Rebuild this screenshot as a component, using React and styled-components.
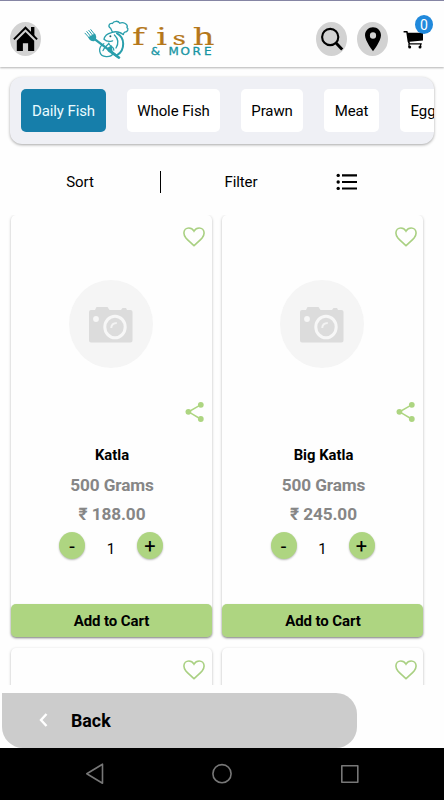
import { useState } from "react";
import styled, { createGlobalStyle } from "styled-components";

const categories = [
  { name: "Daily Fish", width: 85 },
  { name: "Whole Fish", width: 93 },
  { name: "Prawn", width: 62 },
  { name: "Meat", width: 55 },
  { name: "Egg", width: 46 },
];

const products = [
  { id: 1, name: "Katla", weight: "500 Grams", price: "188.00" },
  { id: 2, name: "Big Katla", weight: "500 Grams", price: "245.00" },
  // details are still loading
  { id: 3 },
  { id: 4 },
];

function App() {
  const [category, setCategory] = useState("Daily Fish");
  const [cartCount, setCartCount] = useState(0);

  return (
    <Screen>
      <GlobalStyle />
      <Header>
        <RoundButton aria-label="Home">
          <HomeIcon />
        </RoundButton>
        <Logo />
        <HeaderActions>
          <RoundButton aria-label="Search">
            <SearchIcon />
          </RoundButton>
          <RoundButton aria-label="Location">
            <PinIcon />
          </RoundButton>
          <CartButton aria-label="Cart">
            <CartIcon />
            <Badge>{cartCount}</Badge>
          </CartButton>
        </HeaderActions>
      </Header>
      <CategoryBar>
        {categories.map(({ name, width }) => (
          <Chip
            key={name}
            $width={width}
            $active={name === category}
            onClick={() => setCategory(name)}
          >
            {name}
          </Chip>
        ))}
      </CategoryBar>
      <Toolbar>
        <ToolbarButton>Sort</ToolbarButton>
        <Divider />
        <ToolbarButton>Filter</ToolbarButton>
        <ListIcon />
      </Toolbar>
      <ProductGrid>
        {products.map((product) => (
          <ProductCard
            key={product.id}
            product={product}
            onAdd={(amount) => setCartCount(cartCount + amount)}
          />
        ))}
      </ProductGrid>
      <BackBar>
        <BackIcon />
        Back
      </BackBar>
      <SystemNav>
        <svg width="20" height="24" viewBox="0 0 20 24">
          <path d="M17.5 2.2V21.2L1.8 11.7Z" />
        </svg>
        <svg width="22" height="24" viewBox="0 0 22 24">
          <circle cx="11" cy="11.7" r="9.1" />
        </svg>
        <svg width="20" height="24" viewBox="0 0 20 24">
          <rect x="1.8" y="3.7" width="16" height="16.5" />
        </svg>
      </SystemNav>
    </Screen>
  );
}

function ProductCard({ product, onAdd }) {
  const [amount, setAmount] = useState(1);

  return (
    <Card>
      <Picture>
        <HeartIcon />
        <PlaceholderIcon />
        <ShareIcon />
      </Picture>
      {product.name && (
        <>
          <ProductName>{product.name}</ProductName>
          <Detail>{product.weight}</Detail>
          <Detail>₹ {product.price}</Detail>
          <Stepper>
            <StepButton onClick={() => setAmount(Math.max(1, amount - 1))}>
              -
            </StepButton>
            <Amount>{amount}</Amount>
            <StepButton onClick={() => setAmount(amount + 1)}>+</StepButton>
          </Stepper>
          <AddButton onClick={() => onAdd(amount)}>Add to Cart</AddButton>
        </>
      )}
    </Card>
  );
}

function Logo() {
  return (
    <LogoSvg width="134" height="40" viewBox="83 18 134 40">
      <g fill="none" stroke="#2a9fac" strokeWidth="1.3" strokeLinecap="round">
        {/* chef hat */}
        <path d="M112.4 31L110.6 27.2C107.6 25.6 109 21.8 112.4 22.4C113.6 19.6 118.4 19.6 119.8 22.2C123 20.6 128.6 23 127 26.6C129 28 127.6 31 124.8 31.2C123.8 31.6 123.6 32.4 123.4 33.4" />
        <path d="M112.2 31.4C115.6 30 120.4 31 123.2 33.6" />
        {/* body */}
        <path d="M111.6 31.6C107.4 32.6 104.6 35 104 38.2C106.2 40.4 109.4 40.8 112.6 39.8" />
        <path d="M117 32.4C124.8 36.4 125.6 48.6 117.2 54" strokeWidth="2" />
        <path d="M114.4 34C118.6 38 118.8 42.4 116 47" />
        <path d="M103.8 42.8C97.4 46.2 98.6 55.2 106.2 55.6C109.8 55.8 112.2 54.4 113.4 52.4" />
        <path d="M103 49.6C104 46.8 107.2 44.6 108.8 42.4C110 46 114.4 45.4 113.8 49.2" />
        {/* fork */}
        <path d="M85 32.2L89.4 37M86.8 30.6L90.8 35.6M88.8 29.4L92.6 34.2M90.8 28.6L94.4 33.2" strokeWidth="1" />
        <path d="M94 37.6L119 56.6" strokeWidth="2.4" />
      </g>
      <path d="M88.2 36.2L94.8 32.6C97 35.4 96.6 38.6 94 40.2C91.2 40.4 89.2 39 88.2 36.2Z" fill="#2a9fac" />
      <path d="M106.4 47.4L111.6 44.2L112.6 50.2L120.4 56.6L118.4 57.8L108 50.4Z" fill="#2a9fac" />
      <circle cx="110.4" cy="35.2" r="1" fill="#23616b" />
      <LogoName transform="translate(0 43.6) scale(1.38 1)">
        <tspan x="95.8">f</tspan>
        <tspan x="113.3">i</tspan>
        <tspan x="125" fontSize="19">
          s
        </tspan>
        <tspan x="139.6">h</tspan>
      </LogoName>
      <LogoTagline
        transform="translate(0 54) scale(1.14 1)"
        x="132.2 140 147.8 158.4 168.8 179"
      >
        &amp; MORE
      </LogoTagline>
    </LogoSvg>
  );
}

const HomeIcon = () => (
  <svg width="25" height="26" viewBox="0 0 25 26">
    <path d="M12.5 5.9L21.2 14.8V25H15.1V17.2H9.9V25H3.8V14.8Z" />
    <path
      d="M0.9 13.4L12.5 1.7L24.1 13.4"
      fill="none"
      stroke="#000"
      strokeWidth="2"
    />
    <path d="M18 1H21.4V10.5L18 7Z" />
  </svg>
);

const SearchIcon = () => (
  <svg width="24" height="24" viewBox="0 0 24 24" fill="none" stroke="#000">
    <circle cx="10.2" cy="10" r="8.1" strokeWidth="2.1" />
    <path d="M15.8 15.8L22.2 22.6" strokeWidth="2.9" />
  </svg>
);

const PinIcon = () => (
  <svg width="18" height="26" viewBox="0 0 18 26">
    <path
      fillRule="evenodd"
      d="M9 1.2C4.6 1.2 1 4.6 1 9.2C1 15 9 25.2 9 25.2S17 15 17 9.2C17 4.6 13.4 1.2 9 1.2ZM9 6.2A3.1 3.3 0 1 1 9 12.8A3.1 3.3 0 1 1 9 6.2Z"
    />
  </svg>
);

const CartIcon = () => (
  <svg width="21" height="20" viewBox="0 0 21 20">
    <path d="M0.6 1H4.4L5 2.7H20V10.6L6.5 11.7L7 13.2H18.8V14.6H5.8L4.6 11.6L3.3 2.5H0.6Z" />
    <circle cx="6.7" cy="17" r="1.5" />
    <circle cx="17" cy="17" r="1.5" />
    <path d="M5.4 14H6.6V17H5.4ZM17 14H18.2V17H17Z" />
  </svg>
);

const ListIcon = () => (
  <ListSvg width="22" height="18" viewBox="0 0 22 18">
    <circle cx="2.2" cy="2.4" r="1.7" />
    <circle cx="2.2" cy="9" r="1.7" />
    <circle cx="2.2" cy="15.4" r="1.7" />
    <path d="M6 1.3H21V3.6H6ZM6 7.9H21V10.1H6ZM6 14.4H21V16.6H6Z" />
  </ListSvg>
);

const HeartIcon = () => (
  <HeartSvg width="22" height="20" viewBox="0 0 22 20">
    <path d="M11 18.7C8.4 16 5.2 13.6 2.9 10.9C1.5 9.2 0.9 7.9 0.9 6.1C0.9 3 3.2 1 5.8 1C7.9 1 9.8 2.1 11 4.1C12.2 2.1 14.1 1 16.2 1C18.8 1 21.1 3 21.1 6.1C21.1 7.9 20.5 9.2 19.1 10.9C16.8 13.6 13.6 16 11 18.7Z" />
  </HeartSvg>
);

const ShareIcon = () => (
  <ShareSvg width="19" height="22" viewBox="0 0 19 22">
    <path d="M15.6 3.8L3.6 10.8L15.6 18" fill="none" />
    <circle cx="15.8" cy="3.8" r="2.9" />
    <circle cx="3.4" cy="10.8" r="2.9" />
    <circle cx="15.8" cy="18" r="2.9" />
  </ShareSvg>
);

const PlaceholderIcon = () => (
  <svg width="84" height="88" viewBox="0 0 84 88">
    <ellipse cx="42" cy="44" rx="42" ry="44" fill="#f5f5f5" />
    <path
      fill="#dcdcdc"
      d="M22 30H26L27.5 27H38.5L40.5 30H52L53.5 28H57L58 30H61.5Q63.5 30 63.5 32V60.5Q63.5 62.5 61.5 62.5H22Q20 62.5 20 60.5V32Q20 30 22 30Z"
    />
    <circle cx="27" cy="39" r="2.9" fill="#f7f7f7" />
    <ellipse cx="46" cy="47" rx="10.2" ry="10.8" fill="#dcdcdc" stroke="#f7f7f7" strokeWidth="3" />
    <path d="M42.2 48Q42.5 43.2 47.8 43" fill="none" stroke="#f3f3f3" strokeWidth="2" />
  </svg>
);

const BackIcon = () => (
  <svg width="9" height="14" viewBox="0 0 9 14">
    <path d="M7.5 1L2 7L7.5 13" fill="none" stroke="#fff" strokeWidth="2.4" />
  </svg>
);

export default App;

const GlobalStyle = createGlobalStyle`
  * {
    box-sizing: border-box;
  }

  body {
    margin: 0;
    background: #fefefe;
    font-family: Roboto, "Liberation Sans", sans-serif;
    color: #000;
  }

  button {
    border: 0;
    padding: 0;
    background: none;
    font-family: inherit;
    color: inherit;
  }
`;

const Screen = styled.div`
  width: 444px;
  height: 800px;
  display: flex;
  flex-direction: column;
  overflow: hidden;
`;

const Header = styled.header`
  flex: none;
  height: 67px;
  display: flex;
  align-items: center;
  padding: 10px 20px 0 10px;
  border-top: 1px solid #8585a4;
  box-shadow: 0 1px 2px rgba(0, 0, 0, 0.3);
`;

const HeaderActions = styled.div`
  display: flex;
  align-items: center;
  gap: 10px;
  margin-left: auto;
`;

const RoundButton = styled.button`
  width: 31px;
  height: 34px;
  display: flex;
  align-items: center;
  justify-content: center;
  border-radius: 50%;
  background: #d2d2d2;
`;

const CartButton = styled.button`
  position: relative;
  display: flex;
  margin: 1px 0 0 5px;
`;

const Badge = styled.span`
  position: absolute;
  top: -15px;
  right: -9px;
  width: 18px;
  height: 19px;
  border-radius: 50%;
  background: #2089dc;
  color: #fff;
  font-size: 14px;
  line-height: 20px;
  text-align: center;
`;

const LogoSvg = styled.svg`
  margin: -1px 0 0 42px;
`;

const LogoName = styled.text`
  font-family: "DejaVu Serif", serif;
  font-size: 24.5px;
  fill: #b5771a;
  stroke: #b5771a;
  stroke-width: 0.2px;
`;

const LogoTagline = styled.text`
  font-family: "DejaVu Sans", sans-serif;
  font-size: 10.5px;
  fill: #1795a3;
  stroke: #1795a3;
  stroke-width: 0.3px;
`;

const CategoryBar = styled.nav`
  flex: none;
  height: 67px;
  display: flex;
  align-items: center;
  gap: 21px;
  margin: 10px 10px 0;
  padding: 0 11px 1px;
  overflow: hidden;
  border-radius: 12px;
  background: #eff0f5;
  box-shadow: 0 1px 3px rgba(0, 0, 0, 0.35);
`;

const Chip = styled.button`
  flex: none;
  width: ${({ $width }) => $width}px;
  height: 43px;
  padding-top: 1px;
  border-radius: 5px;
  background: ${({ $active }) => ($active ? "#167eaa" : "#fff")};
  color: ${({ $active }) => ($active ? "#e9fbff" : "#000")};
  font-size: 15px;
  letter-spacing: -0.1px;
  white-space: nowrap;
`;

const Toolbar = styled.div`
  flex: none;
  height: 71px;
  display: flex;
  align-items: center;
  padding: 5px 0 0;
`;

const ToolbarButton = styled.button`
  width: 160px;
  font-size: 15px;
  letter-spacing: -0.1px;
`;

const Divider = styled.div`
  width: 1px;
  height: 22px;
  background: #000;
`;

const ListSvg = styled.svg`
  margin-left: 15px;
`;

const ProductGrid = styled.main`
  flex: none;
  height: 470px;
  display: grid;
  grid-template-columns: 201px 201px;
  grid-auto-rows: 422px;
  gap: 11px 10.5px;
  padding: 0 10.5px;
  overflow: hidden;
`;

const Card = styled.article`
  display: flex;
  flex-direction: column;
  align-items: center;
  border-radius: 5px;
  background: #fefefe;
  box-shadow: 0 1px 3px rgba(0, 0, 0, 0.28);
`;

const Picture = styled.div`
  position: relative;
  width: 100%;
  height: 218px;
  display: flex;
  justify-content: center;
  align-items: center;
  padding-right: 1px;
`;

const HeartSvg = styled.svg`
  position: absolute;
  top: 12px;
  right: 6.5px;
  fill: none;
  stroke: #a9d082;
  stroke-width: 1.6px;
`;

const ShareSvg = styled.svg`
  position: absolute;
  top: 186px;
  right: 8px;
  fill: #add581;

  path {
    stroke: #add581;
    stroke-width: 1.5px;
  }
`;

const ProductName = styled.h2`
  margin: 12px -2px 10px 0;
  font-size: 14.8px;
  font-weight: 700;
  line-height: 20px;
`;

const Detail = styled.p`
  margin: 0 -2px 8px 0;
  color: #868686;
  font-size: 17.2px;
  font-weight: 700;
  letter-spacing: -0.1px;
  line-height: 21px;
`;

const Stepper = styled.div`
  display: flex;
  align-items: center;
  margin-top: -1px;
`;

const StepButton = styled.button`
  width: 26px;
  height: 27px;
  border-radius: 50%;
  background: #aed581;
  box-shadow: 0 1px 2px rgba(0, 0, 0, 0.28);
  font-size: 20px;
  font-weight: 400;
  line-height: 29px;
`;

const Amount = styled.span`
  width: 52px;
  padding-top: 6px;
  font-size: 15px;
  text-align: center;
`;

const AddButton = styled.button`
  width: 100%;
  height: 33px;
  margin-top: auto;
  padding-left: 1px;
  border-radius: 5px;
  background: #aed581;
  box-shadow: 0 1px 2px rgba(0, 0, 0, 0.3);
  font-size: 15px;
  font-weight: 700;
  letter-spacing: -0.1px;
`;

const BackBar = styled.button`
  flex: none;
  width: 355px;
  height: 55px;
  display: flex;
  align-items: center;
  gap: 23px;
  margin: 8px 0 0 2px;
  padding: 0 0 1px 37px;
  border-radius: 0 21px 21px 21px;
  background: #ccc;
  font-size: 17.8px;
  font-weight: 700;
`;

const SystemNav = styled.footer`
  flex: none;
  height: 52px;
  display: flex;
  align-items: center;
  justify-content: space-between;
  padding: 0 84.5px;
  background: #000;

  svg {
    fill: none;
    stroke: #777;
    stroke-width: 1.6px;
    stroke-linejoin: round;
  }
`;
